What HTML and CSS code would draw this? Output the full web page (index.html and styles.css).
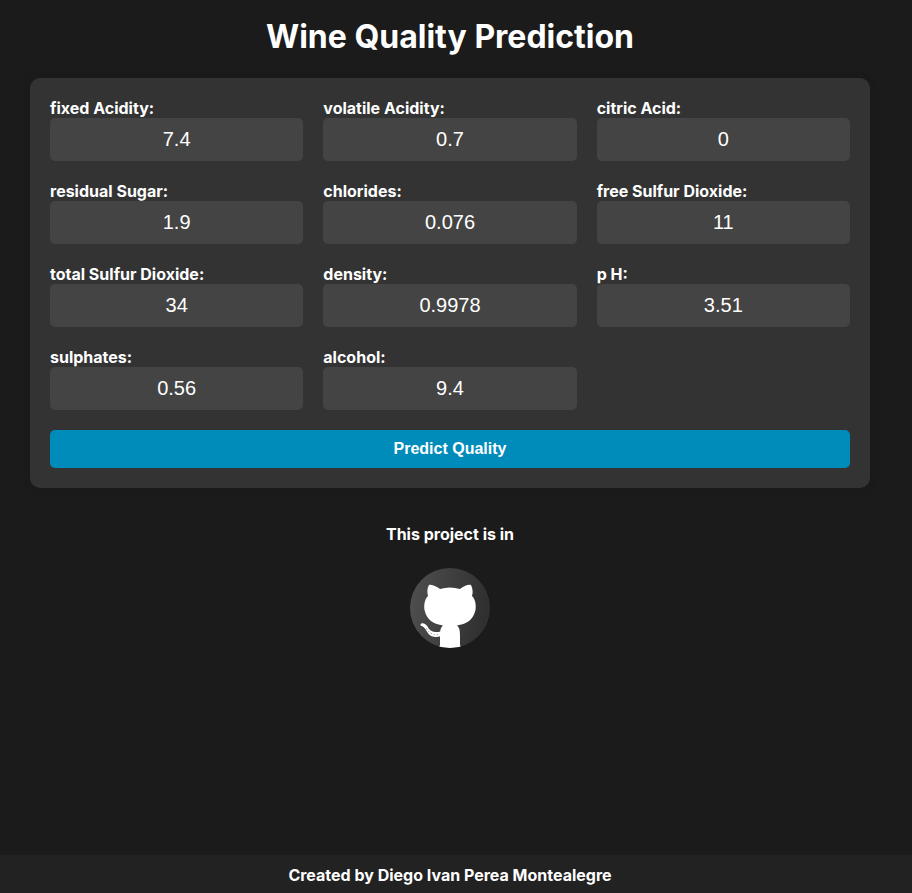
FILE: index.html
```html
<!DOCTYPE html>
<html lang="en">
<head>
<meta charset="utf-8">
<title>Wine Quality Prediction</title>
<link rel="stylesheet" href="styles.css">
</head>
<body>
<main>
<h1>Wine Quality Prediction</h1>
<form class="card">
<label>fixed Acidity:<input value="7.4"></label>
<label>volatile Acidity:<input value="0.7"></label>
<label>citric Acid:<input value="0"></label>
<label>residual Sugar:<input value="1.9"></label>
<label>chlorides:<input value="0.076"></label>
<label>free Sulfur Dioxide:<input value="11"></label>
<label>total Sulfur Dioxide:<input value="34"></label>
<label>density:<input value="0.9978"></label>
<label>p H:<input value="3.51"></label>
<label>sulphates:<input value="0.56"></label>
<label>alcohol:<input value="9.4"></label>
<button type="button">Predict Quality</button>
</form>
<p class="project">This project is in</p>
<svg class="logo" viewBox="0 0 80 80" role="img" aria-label="GitHub">
<defs>
<linearGradient id="disc" x1="0" y1="0" x2="1" y2="0.15"><stop offset="0" stop-color="#505050"/><stop offset="1" stop-color="#303030"/></linearGradient>
<clipPath id="round"><circle cx="40" cy="40" r="40"/></clipPath>
</defs>
<circle cx="40" cy="40" r="40" fill="url(#disc)"/>
<g clip-path="url(#round)">
<path class="cat" d="M19 17C22 16 27 19 30 21Q40 18 50 21C54 18 58 16 61 17C63 21 63 25 62 28C66 32 66 38 65.500 42C63 53 56 56 47 57.500C50 60 50 64 50 68V77L51.500 80H28.500L30 77V68C30 64 30 60 33 57.500C24 56 17 53 14.500 42C14 38 14 32 18 28C17 24 17 20 19 17Z"/>
<path class="tail" d="M10.500 56.500C12 54 16 56 17.500 58.500C20 63.500 24 65 30.500 63.500V68.300C26 69.700 21 69 18.500 66C16 62 14.500 58.500 10.500 57.500Z"/>
<path class="suckers" d="M16.500 60.500Q19.500 65.500 23.500 66.500Q26 67 29 66"/>
</g>
</svg>
</main>
<footer>Created by Diego Ivan Perea Montealegre</footer>
</body>
</html>
```
FILE: styles.css
```css
*{box-sizing:border-box}
body{margin:0;min-height:893px;display:flex;flex-direction:column;background:#1b1b1b;color:#fff;font:700 16px/20px Inter,sans-serif}
main{flex:1;width:840px;margin-left:30px;display:flex;flex-direction:column;align-items:center}
h1{margin:17px 0 21px;font-size:32px;line-height:40px;font-weight:700}
.card{width:100%;padding:20px;display:grid;grid-template-columns:repeat(3,1fr);gap:20px;background:#333;border-radius:10px;box-shadow:0 0 10px rgba(0,0,0,.1)}
label{display:flex;flex-direction:column;height:63px}
input{width:100%;height:43px;border:0;border-radius:5px;padding:10px;background:#444;color:#fff;text-align:center;font:20px "Liberation Sans",sans-serif}
button{grid-column:1/-1;height:38px;padding:0;border:0;border-radius:5px;background:#008cba;color:#fff;font:700 16px/20px "Liberation Sans",sans-serif}
.project{margin:36px 0 24px}
.logo{width:80px;height:80px}
.cat,.tail{fill:#fff}
.suckers{fill:none;stroke:#555;stroke-width:.8;stroke-dasharray:1 2.2}
footer{height:38px;padding:10px 12px 8px 0;background:#222;text-align:center}
```
